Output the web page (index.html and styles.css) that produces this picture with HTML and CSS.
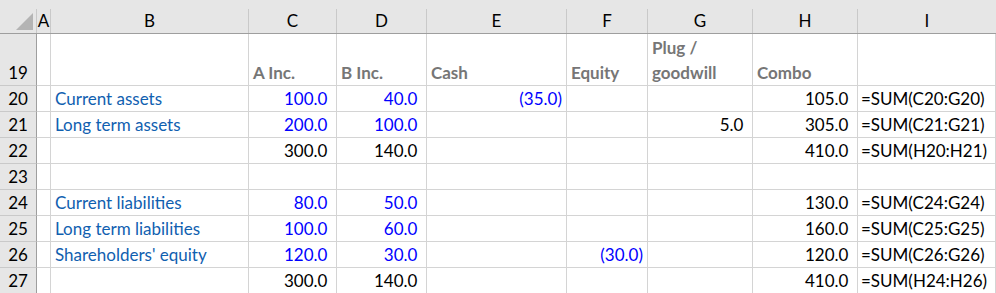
FILE: index.html
```html
<!DOCTYPE html>
<html lang="en">
  <head>
    <meta charset="UTF-8" />
    <title>Sheet</title>
    <link rel="stylesheet" href="styles.css">
  </head>
  <body>
    <div class="sheet">
      <!-- column headers -->
      <div class="colhead corner">
        <span>
          <svg width="36" height="24" viewBox="0 9 36 24">
            <polygon points="33,13 33,30 16,30" fill="#b4b4b4" />
          </svg>
        </span>
      </div>
      <div class="colhead"><span>A</span></div>
      <div class="colhead"><span>B</span></div>
      <div class="colhead"><span>C</span></div>
      <div class="colhead"><span>D</span></div>
      <div class="colhead"><span>E</span></div>
      <div class="colhead"><span>F</span></div>
      <div class="colhead"><span>G</span></div>
      <div class="colhead"><span>H</span></div>
      <div class="colhead last"><span>I</span></div>

      <!-- row 19 -->
      <div class="rowhead">19</div>
      <div class="cell"></div>
      <div class="cell"></div>
      <div class="cell title">A Inc.</div>
      <div class="cell title">B Inc.</div>
      <div class="cell title">Cash</div>
      <div class="cell title">Equity</div>
      <div class="cell title wrap">Plug /<br />goodwill</div>
      <div class="cell title">Combo</div>
      <div class="cell"></div>

      <!-- row 20 -->
      <div class="rowhead">20</div>
      <div class="cell"></div>
      <div class="cell label">Current assets</div>
      <div class="cell num input">100.0<i>)</i></div>
      <div class="cell num input">40.0<i>)</i></div>
      <div class="cell num input">(35.0)</div>
      <div class="cell"></div>
      <div class="cell"></div>
      <div class="cell num">105.0<i>)</i></div>
      <div class="cell formula">=SUM(C20:G20)</div>

      <!-- row 21 -->
      <div class="rowhead">21</div>
      <div class="cell"></div>
      <div class="cell label">Long term assets</div>
      <div class="cell num input">200.0<i>)</i></div>
      <div class="cell num input">100.0<i>)</i></div>
      <div class="cell"></div>
      <div class="cell"></div>
      <div class="cell num">5.0<i>)</i></div>
      <div class="cell num">305.0<i>)</i></div>
      <div class="cell formula">=SUM(C21:G21)</div>

      <!-- row 22 -->
      <div class="rowhead">22</div>
      <div class="cell"></div>
      <div class="cell"></div>
      <div class="cell num">300.0<i>)</i></div>
      <div class="cell num">140.0<i>)</i></div>
      <div class="cell"></div>
      <div class="cell"></div>
      <div class="cell"></div>
      <div class="cell num">410.0<i>)</i></div>
      <div class="cell formula">=SUM(H20:H21)</div>

      <!-- row 23 -->
      <div class="rowhead">23</div>
      <div class="cell"></div>
      <div class="cell"></div>
      <div class="cell"></div>
      <div class="cell"></div>
      <div class="cell"></div>
      <div class="cell"></div>
      <div class="cell"></div>
      <div class="cell"></div>
      <div class="cell"></div>

      <!-- row 24 -->
      <div class="rowhead">24</div>
      <div class="cell"></div>
      <div class="cell label">Current liabilities</div>
      <div class="cell num input">80.0<i>)</i></div>
      <div class="cell num input">50.0<i>)</i></div>
      <div class="cell"></div>
      <div class="cell"></div>
      <div class="cell"></div>
      <div class="cell num">130.0<i>)</i></div>
      <div class="cell formula">=SUM(C24:G24)</div>

      <!-- row 25 -->
      <div class="rowhead">25</div>
      <div class="cell"></div>
      <div class="cell label">Long term liabilities</div>
      <div class="cell num input">100.0<i>)</i></div>
      <div class="cell num input">60.0<i>)</i></div>
      <div class="cell"></div>
      <div class="cell"></div>
      <div class="cell"></div>
      <div class="cell num">160.0<i>)</i></div>
      <div class="cell formula">=SUM(C25:G25)</div>

      <!-- row 26 -->
      <div class="rowhead">26</div>
      <div class="cell"></div>
      <div class="cell label">Shareholders' equity</div>
      <div class="cell num input">120.0<i>)</i></div>
      <div class="cell num input">30.0<i>)</i></div>
      <div class="cell"></div>
      <div class="cell num input">(30.0)</div>
      <div class="cell"></div>
      <div class="cell num">120.0<i>)</i></div>
      <div class="cell formula">=SUM(C26:G26)</div>

      <!-- row 27 -->
      <div class="rowhead">27</div>
      <div class="cell"></div>
      <div class="cell"></div>
      <div class="cell num">300.0<i>)</i></div>
      <div class="cell num">140.0<i>)</i></div>
      <div class="cell"></div>
      <div class="cell"></div>
      <div class="cell"></div>
      <div class="cell num">410.0<i>)</i></div>
      <div class="cell formula">=SUM(H24:H26)</div>
    </div>
  </body>
</html>
```

FILE: styles.css
```css
body {
  margin: 0;
  background: #fff;
  font-family: Lato, "Liberation Sans", sans-serif;
  font-size: 17px;
  color: #000;
}

.sheet {
  display: grid;
  grid-template-columns: 37px 14px 198px 88px 90px 140px 81px 105px 105px 1fr;
  grid-template-rows: 34px 52px repeat(8, 26px);
  overflow: hidden;
  height: 293px;
}

.colhead {
  background: #e6e6e6;
  border-bottom: 1px solid #9e9e9e;
  padding-top: 9px;
  box-sizing: border-box;
}
.colhead > span {
  display: flex;
  height: 100%;
  align-items: center;
  justify-content: center;
  border-right: 1px solid #c9c9c9;
  box-sizing: border-box;
  padding-bottom: 1px;
}
.colhead.last > span {
  border-right: none;
}
.colhead.corner > span {
  display: block;
  padding: 0;
}
.colhead svg {
  display: block;
}

.rowhead {
  background: #e6e6e6;
  border-right: 1px solid #9e9e9e;
  border-bottom: 1px solid #c9c9c9;
  box-sizing: border-box;
  display: flex;
  align-items: flex-end;
  justify-content: center;
  padding-bottom: 4px;
  line-height: 1;
}

.cell {
  border-right: 1px solid #d4d4d4;
  border-bottom: 1px solid #d4d4d4;
  box-sizing: border-box;
  display: flex;
  align-items: flex-end;
  padding: 0 3px 4px 4px;
  white-space: nowrap;
  line-height: 1;
}

.title {
  font-weight: 700;
  color: #767676;
}
.wrap {
  line-height: 25px;
  padding-bottom: 0;
}

.label {
  color: #1060b0;
}

.num {
  justify-content: flex-end;
  padding-right: 4px;
}
.num i {
  font-style: normal;
  visibility: hidden;
}
.input {
  color: #0000ff;
}

.formula {
  padding-left: 3px;
}
```
